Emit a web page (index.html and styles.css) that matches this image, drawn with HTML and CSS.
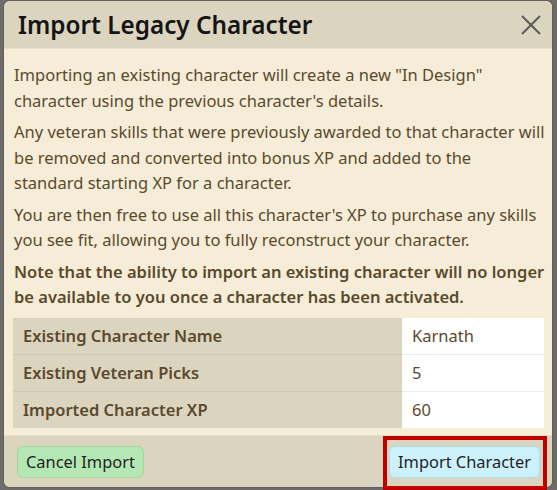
FILE: index.html
```html
<!DOCTYPE html>
<html>
<head>
<meta charset="utf-8">
<link rel="stylesheet" href="styles.css">
</head>
<body>
<div class="backdrop">
  <div class="modal">
    <div class="modal-header">
      <h1 class="modal-title">Import Legacy Character</h1>
      <button class="close-btn" aria-label="Close">
        <svg width="20" height="20" viewBox="0 0 20 20"><path d="M1 1 L19 19 M19 1 L1 19" stroke="#5b5b5b" stroke-width="2" fill="none"/></svg>
      </button>
    </div>
    <div class="modal-body">
      <p>Importing an existing character will create a new "In Design" character using the previous character's details.</p>
      <p>Any veteran skills that were previously awarded to that character will be removed and converted into bonus XP and added to the standard&nbsp;starting XP for a character.</p>
      <p>You are then free to use all this character's XP to purchase any skills you see fit, allowing you to fully reconstruct your character.</p>
      <p class="note">Note that the ability to import an existing character will no longer be available to you once a character has been activated.</p>
      <table class="details">
        <tr><th>Existing Character Name</th><td>Karnath</td></tr>
        <tr><th>Existing Veteran Picks</th><td>5</td></tr>
        <tr><th>Imported Character XP</th><td>60</td></tr>
      </table>
    </div>
    <div class="modal-footer">
      <button class="btn btn-cancel">Cancel Import</button>
      <button class="btn btn-import">Import Character</button>
    </div>
  </div>
  <div class="highlight"></div>
</div>
</body>
</html>
```
FILE: styles.css
```css
html, body {
  margin: 0;
  padding: 0;
  background: #6e6c69;
  font-family: "Noto Sans", "Open Sans", sans-serif;
}
.backdrop {
  position: relative;
  width: 557px;
  height: 490px;
  overflow: hidden;
  padding-top: 1px;
  box-sizing: border-box;
}
.modal {
  margin-left: 4px;
  width: 548px;
  height: 486px;
  border-radius: 6px;
  overflow: hidden;
  background: #f5edd8;
  display: flex;
  flex-direction: column;
  box-shadow: 0 0 2px rgba(0,0,0,0.4);
}
.modal-header {
  height: 48px;
  flex: none;
  box-sizing: border-box;
  background: #dbd4bf;
  display: flex;
  align-items: center;
  justify-content: space-between;
  padding: 0 6px 0 14px;
  border-bottom: 1px solid #e8e0c9;
}
.modal-title {
  margin: 0;
  font-size: 24.3px;
  font-weight: 600;
  color: #141414;
}
.close-btn {
  border: 0;
  background: none;
  padding: 0;
  width: 30px;
  height: 30px;
  display: flex;
  align-items: center;
  justify-content: center;
}
.modal-body {
  flex: 1;
  padding: 13px 4px 0 10px;
  color: #5a4a2c;
  font-size: 16.5px;
  line-height: 25.5px;
}
.modal-body p {
  margin: 0 0 6px;
}
.modal-body .note {
  font-weight: 600;
  margin-bottom: 8px;
}
.details {
  width: 531px;
  border-collapse: collapse;
  margin-left: -1px;
}
.details th, .details td {
  height: 36px;
  padding: 0 10px;
  text-align: left;
  border-bottom: 1px solid #cfc8b3;
}
.details tr:last-child th, .details tr:last-child td {
  border-bottom: 0;
}
.details th {
  background: #dbd4bf;
  width: 369px;
  font-weight: 600;
}
.details td {
  background: #ffffff;
  font-weight: 400;
  border-bottom-color: #ececec;
}
.modal-footer {
  height: 52px;
  flex: none;
  box-sizing: border-box;
  background: #dbd4bf;
  display: flex;
  align-items: center;
  justify-content: space-between;
  padding: 0 12px 0 13px;
  border-top: 1px solid #e8e0c9;
}
.btn {
  font-family: inherit;
  font-size: 16.4px;
  height: 32px;
  padding: 0 8px;
  border-radius: 6px;
  color: #1f1f1f;
  cursor: pointer;
}
.btn-cancel {
  background: #b5e7b5;
  border: 1px solid #9fd99f;
}
.btn-import {
  background: #cdf1fc;
  border: 1px solid #a9def0;
}
.highlight {
  position: absolute;
  left: 383px;
  top: 436px;
  width: 164px;
  height: 54px;
  border: 4px solid #c00000;
  box-sizing: border-box;
  pointer-events: none;
}
```
